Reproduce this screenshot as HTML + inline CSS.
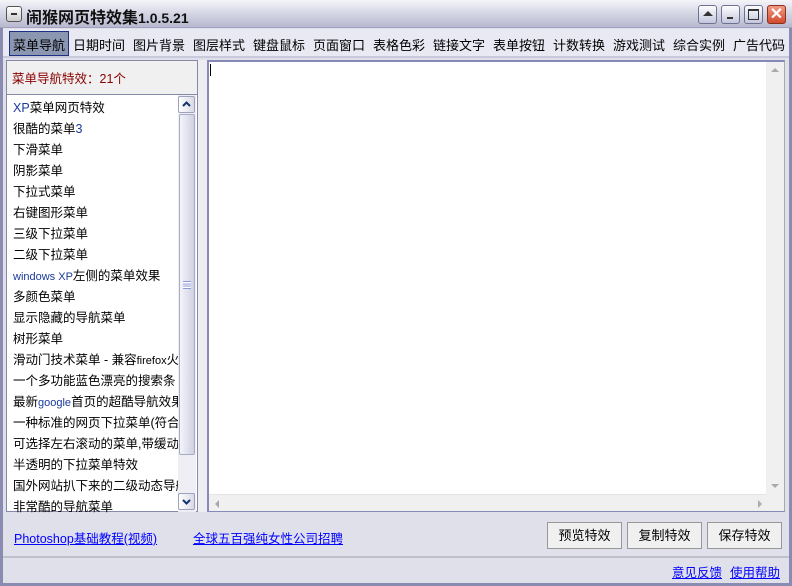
<!DOCTYPE html>
<html><head><meta charset="utf-8"><style>
*{margin:0;padding:0;box-sizing:border-box}
body{width:792px;height:586px;overflow:hidden;background:#dfe0e9;font-family:"Liberation Sans","Noto Sans CJK SC","WenQuanYi Zen Hei",sans-serif;font-size:12px;position:relative}
.abs{position:absolute}
#win{left:0;top:0;width:792px;height:586px;border:3px solid #8a8bb0;border-top:none}
#title{left:0;top:0;width:792px;height:28px;background:linear-gradient(#f4f4f9,#d2d3e2 55%,#b8b9cf);border-bottom:1px solid #a0a2c0}
#title .t{left:26px;top:4px;font-size:16px;font-weight:bold;color:#111}
.sysbtn{top:5px;width:19px;height:19px;border:1px solid #6f7190;border-radius:3px;background:linear-gradient(#fdfdff,#c4c6dc)}
#menu{left:3px;top:29px;width:786px;height:29px;background:#e8e9f2;border-bottom:2px solid #c8c9da}
.mi{top:6px;font-size:13px;color:#000}
.sel{left:6px;top:2px;width:60px;height:25px;background:#8b96b0;border:1px solid #1e2f88}
#left{left:6px;top:60px;width:192px;height:452px;border:1px solid #8789a8;background:#f0f0f0}
#list{left:0;top:33px;width:190px;height:417px;background:#fff;border-top:1px solid #8789a8}
.it{left:6px;font-size:12.5px;white-space:nowrap;width:165px;overflow:hidden}
#vs{left:171px;top:0;width:18px;height:417px;background:#eeeef4}
.sb{width:17px;height:17px;border:1px solid #9fa2bc;border-radius:2px;background:linear-gradient(90deg,#fff,#d8d9e6)}
#right{left:207px;top:60px;width:578px;height:452px;border:2px solid #8789b8;border-right:1px solid #aaa;background:#fff}
.btn{top:522px;width:75px;height:27px;border:1px solid #999;background:#f0f0f0;font-size:13px;text-align:center;line-height:25px}
a{color:#00f;text-decoration:underline;font-size:12.5px}
</style></head><body>
<div id="win" class="abs"></div>
<div id="title" class="abs">
<div class="abs" style="left:6px;top:6px;width:16px;height:16px;border:1px solid #555;border-radius:3px;background:linear-gradient(#fff,#ccc)"><div class="abs" style="left:4px;top:6px;width:6px;height:2px;background:#333"></div></div>
<div class="t abs">闹猴网页特效集<span style="font-size:14px">1.0.5.21</span></div>
<div class="sysbtn abs" style="left:698px"><div class="abs" style="left:4px;top:5px;width:0;height:0;border-left:5px solid transparent;border-right:5px solid transparent;border-bottom:5px solid #333"></div></div>
<div class="sysbtn abs" style="left:721px"><div class="abs" style="left:5px;top:11px;width:6px;height:2px;background:#333"></div></div>
<div class="sysbtn abs" style="left:744px"><div class="abs" style="left:3px;top:3px;width:11px;height:11px;border:1px solid #333;border-top-width:2px"></div></div>
<div class="sysbtn abs" style="left:767px;background:linear-gradient(#f39a82,#d24a2e);border-color:#8a3020;color:#fff;font-size:16px;line-height:17px;text-align:center;font-weight:bold">✕</div>
</div>
<div id="menu" class="abs">
<div class="sel abs"></div>
<div class="mi abs" style="left:10px">菜单导航</div>
<div class="mi abs" style="left:70px">日期时间</div>
<div class="mi abs" style="left:130px">图片背景</div>
<div class="mi abs" style="left:190px">图层样式</div>
<div class="mi abs" style="left:250px">键盘鼠标</div>
<div class="mi abs" style="left:310px">页面窗口</div>
<div class="mi abs" style="left:370px">表格色彩</div>
<div class="mi abs" style="left:430px">链接文字</div>
<div class="mi abs" style="left:490px">表单按钮</div>
<div class="mi abs" style="left:550px">计数转换</div>
<div class="mi abs" style="left:610px">游戏测试</div>
<div class="mi abs" style="left:670px">综合实例</div>
<div class="mi abs" style="left:730px">广告代码</div>
</div>
<div class="abs" style="left:198px;top:60px;width:9px;height:452px;background:#eeeef2"></div>
<div id="left" class="abs">
<div class="abs" style="left:5px;top:7px;color:#8b0000;font-size:12.5px">菜单导航特效：21个</div>
<div id="list" class="abs">
<div class="it abs" style="top:2px"><span style="color:#1a3a9a">XP</span>菜单网页特效</div>
<div class="it abs" style="top:23px">很酷的菜单<span style="color:#1a3a9a">3</span></div>
<div class="it abs" style="top:44px">下滑菜单</div>
<div class="it abs" style="top:65px">阴影菜单</div>
<div class="it abs" style="top:86px">下拉式菜单</div>
<div class="it abs" style="top:107px">右键图形菜单</div>
<div class="it abs" style="top:128px">三级下拉菜单</div>
<div class="it abs" style="top:149px">二级下拉菜单</div>
<div class="it abs" style="top:170px"><span style="color:#1a3a9a;font-size:11px">windows XP</span>左侧的菜单效果</div>
<div class="it abs" style="top:191px">多颜色菜单</div>
<div class="it abs" style="top:212px">显示隐藏的导航菜单</div>
<div class="it abs" style="top:233px">树形菜单</div>
<div class="it abs" style="top:254px">滑动门技术菜单 - 兼容<span style="font-size:11px">firefox</span>火狐</div>
<div class="it abs" style="top:275px">一个多功能蓝色漂亮的搜索条</div>
<div class="it abs" style="top:296px">最新<span style="color:#1a3a9a;font-size:11px">google</span>首页的超酷导航效果</div>
<div class="it abs" style="top:317px">一种标准的网页下拉菜单(符合w</div>
<div class="it abs" style="top:338px">可选择左右滚动的菜单,带缓动效</div>
<div class="it abs" style="top:359px">半透明的下拉菜单特效</div>
<div class="it abs" style="top:380px">国外网站扒下来的二级动态导航</div>
<div class="it abs" style="top:401px">非常酷的导航菜单</div>
<div id="vs" class="abs">
<div class="sb abs" style="left:0;top:1px"><svg width="15" height="15" style="position:absolute;left:0;top:0"><path d="M4 9 L7.5 5.5 L11 9" stroke="#13336b" stroke-width="2" fill="none"/></svg></div>
<div class="abs" style="left:1px;top:19px;width:16px;height:341px;border:1px solid #a8abc4;border-radius:2px;background:linear-gradient(90deg,#f4f4fa,#cfd1e2)"><div class="abs" style="left:3px;top:166px;width:8px;height:8px;border-top:1px solid #8d9ad8;border-bottom:1px solid #8d9ad8;background:linear-gradient(#fff 25%,#8d9ad8 25%,#8d9ad8 40%,#fff 40%,#fff 60%,#8d9ad8 60%,#8d9ad8 75%,#fff 75%)"></div></div>
<div class="sb abs" style="left:0;top:398px"><svg width="15" height="15" style="position:absolute;left:0;top:0"><path d="M4 6 L7.5 9.5 L11 6" stroke="#13336b" stroke-width="2" fill="none"/></svg></div>
</div>
</div>
</div>
<div id="right" class="abs">
<div class="abs" style="left:1px;top:2px;width:1px;height:12px;background:#000"></div>
<div class="abs" style="left:557px;top:0;width:18px;height:449px;background:#f0f0f0"><div class="abs" style="left:5px;top:6px;border-left:4px solid transparent;border-right:4px solid transparent;border-bottom:4px solid #aaa"></div><div class="abs" style="left:5px;top:422px;border-left:4px solid transparent;border-right:4px solid transparent;border-top:4px solid #aaa"></div></div>
<div class="abs" style="left:0;top:432px;width:557px;height:17px;background:#f0f0f0;border-top:1px solid #e4e4e4"><div class="abs" style="left:6px;top:5px;border-top:4px solid transparent;border-bottom:4px solid transparent;border-right:4px solid #aaa"></div><div class="abs" style="left:549px;top:5px;border-top:4px solid transparent;border-bottom:4px solid transparent;border-left:4px solid #aaa"></div></div>
</div>
<a class="abs" style="left:14px;top:528px">Photoshop基础教程(视频)</a>
<a class="abs" style="left:193px;top:528px">全球五百强纯女性公司招聘</a>
<div class="btn abs" style="left:547px">预览特效</div>
<div class="btn abs" style="left:627px">复制特效</div>
<div class="btn abs" style="left:707px">保存特效</div>
<div class="abs" style="left:3px;top:556px;width:786px;height:2px;background:#bfc0cc"></div>
<a class="abs" style="left:672px;top:562px">意见反馈</a>
<a class="abs" style="left:730px;top:562px">使用帮助</a>
</body></html>
